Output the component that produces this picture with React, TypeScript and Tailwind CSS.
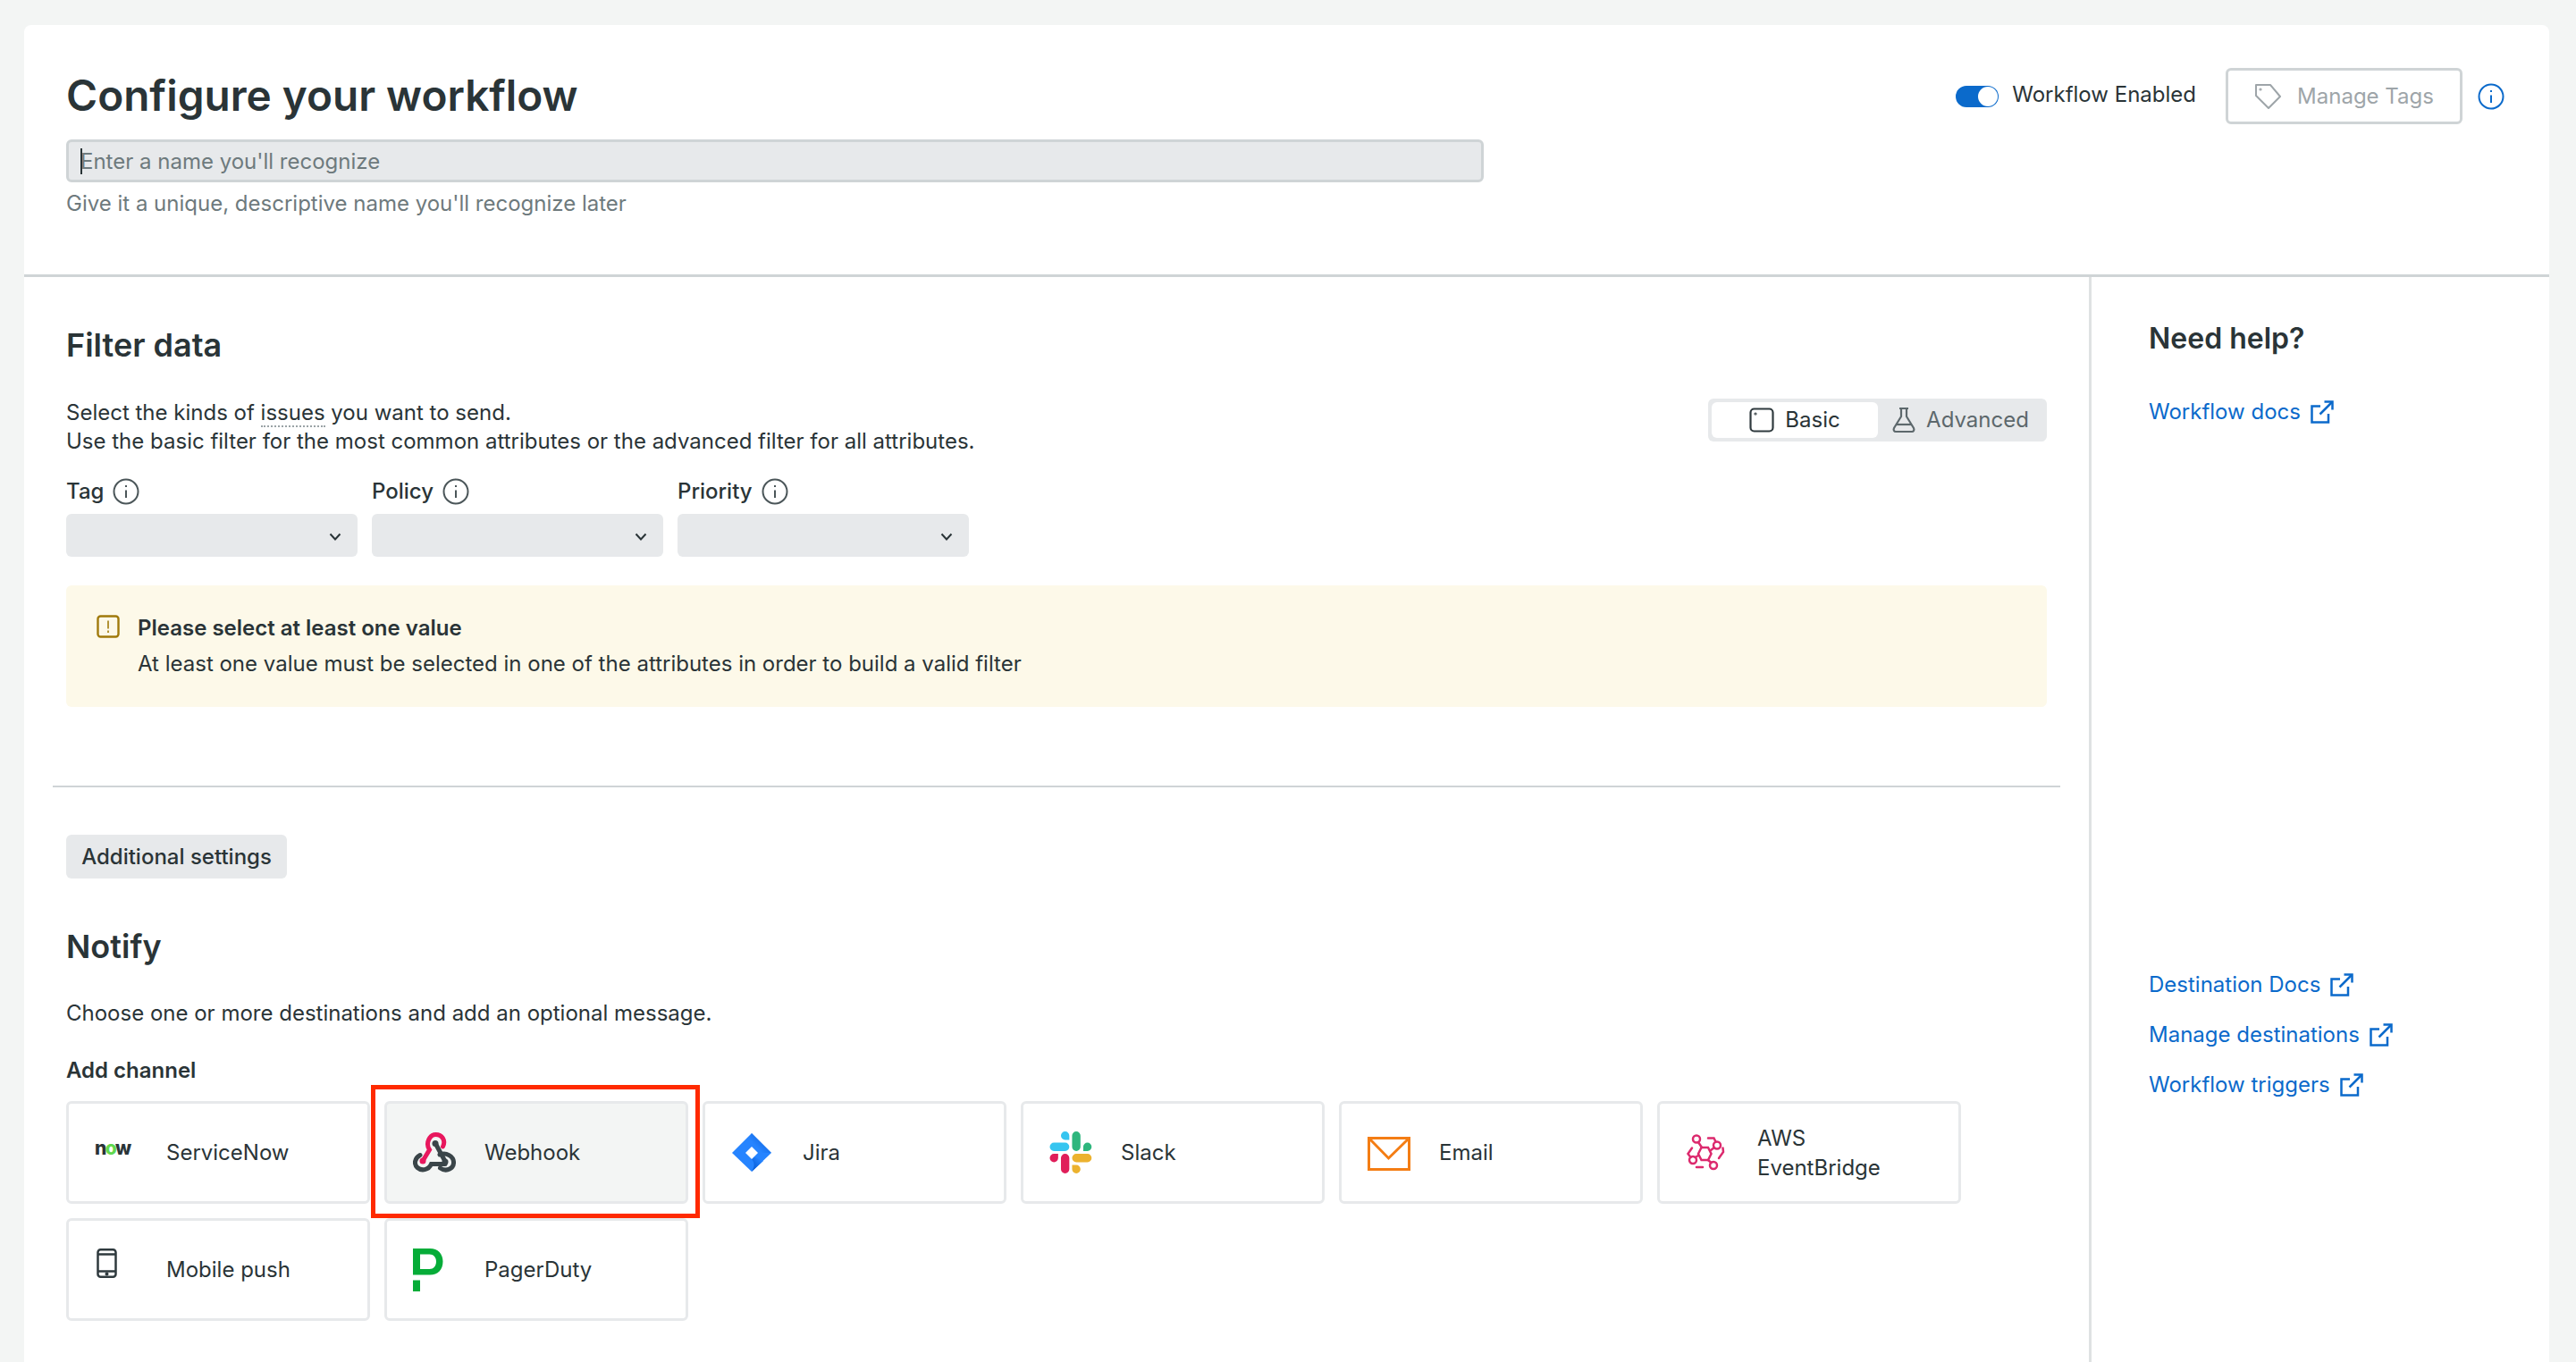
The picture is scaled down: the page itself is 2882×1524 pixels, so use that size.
import React from "react";

const channels = [
  { id: "servicenow", label: "ServiceNow" },
  { id: "webhook", label: "Webhook" },
  { id: "jira", label: "Jira" },
  { id: "slack", label: "Slack" },
  { id: "email", label: "Email" },
  { id: "eventbridge", label: "AWS EventBridge" },
  { id: "mobile", label: "Mobile push" },
  { id: "pagerduty", label: "PagerDuty" },
];

const InfoIcon = ({ color = "#4b5659" }: { color?: string }) => (
  <svg width="30" height="30" viewBox="0 0 30 30" fill="none" stroke={color} strokeWidth="2">
    <circle cx="15" cy="15" r="13.5" />
    <path d="M15 13.5V22" />
    <path d="M15 8v2" />
  </svg>
);

const ExternalIcon = () => (
  <svg width="26" height="26" viewBox="0 0 26 26" fill="none" stroke="#0b6acb" strokeWidth="2.5">
    <path d="M11 6.5H1.5V24.5H20V15" />
    <path d="M10.5 15.5L24 2" />
    <path d="M15.5 1.5H24.5V10.5" />
  </svg>
);

const Chevron = () => (
  <svg width="14" height="9" viewBox="0 0 14 9" fill="none" stroke="#2a3437" strokeWidth="2">
    <path d="M1.5 1.5L7 7.5L12.5 1.5" />
  </svg>
);

const HelpLink = ({ label }: { label: string }) => (
  <a className="flex items-center gap-[11px] text-[#0b6acb] h-[32px]">
    {label}
    <ExternalIcon />
  </a>
);

const FilterSelect = ({ label }: { label: string }) => (
  <div className="w-[326px]">
    <div className="flex items-center gap-[10px] h-[30px] font-medium">
      {label}
      <InfoIcon />
    </div>
    <div className="mt-[10px] h-[48px] rounded-[6px] bg-[#e7e9eb] flex items-center justify-end pr-[18px] pt-[3px]">
      <Chevron />
    </div>
  </div>
);

const ChannelIcon = ({ id }: { id: string }) => {
  if (id === "servicenow") {
    return (
      <div className="w-[48px] h-[48px] pt-[9px] text-[#2a3437] text-[21px] font-extrabold leading-[20px] tracking-[-1.5px]">
        n<span className="text-[#62d84e]">o</span>w
      </div>
    );
  }
  if (id === "webhook") {
    return (
      <svg width="48" height="48" viewBox="0 0 48 48" fill="none" strokeWidth="5">
        <path d="M8 26.5C1.5 30 1 37 5 40.5C9.5 44.5 17.5 43.5 20.5 36.5H36" stroke="#3a4549" strokeLinecap="round" />
        <path d="M30 26C37.5 23 45 28 45.5 34C46 41 38 46 30.5 41" stroke="#3a4549" strokeLinecap="round" />
        <path d="M25.5 14L36 33.5" stroke="#3a4549" strokeLinecap="round" />
        <circle cx="25" cy="13.5" r="3.5" fill="#3a4549" />
        <circle cx="36" cy="34" r="3.5" fill="#3a4549" />
        <path d="M11 33L18.5 20.5C13.5 13 19 3.5 25.5 3.5C32.5 3.5 37 10 33.5 17" stroke="#e8175d" strokeLinecap="round" />
        <circle cx="11" cy="33" r="3.5" fill="#e8175d" />
      </svg>
    );
  }
  if (id === "jira") {
    return (
      <svg width="48" height="48" viewBox="0 0 48 48">
        <defs>
          <linearGradient id="jiraTop" x1="0.9" y1="0.2" x2="0.3" y2="0.7">
            <stop offset="0" stopColor="#0052cc" />
            <stop offset="1" stopColor="#2684ff" />
          </linearGradient>
          <linearGradient id="jiraBottom" x1="0.2" y1="0.8" x2="0.8" y2="0.3">
            <stop offset="0" stopColor="#0052cc" />
            <stop offset="1" stopColor="#2684ff" />
          </linearGradient>
        </defs>
        <path d="M23 2L45 24L23 45L1 24Z" fill="#2684ff" />
        <path d="M23 2C19 8 20 12 23 17L30 24L45 24Z" fill="url(#jiraTop)" opacity="0.7" />
        <path d="M23 45C27 39 26 35 23 31L16 24L36 33Z" fill="url(#jiraBottom)" />
        <path d="M23 17L30 24L23 31L16 24Z" fill="#fff" />
      </svg>
    );
  }
  if (id === "slack") {
    return (
      <svg width="48" height="47" viewBox="0 0 54 54">
        <path d="M19.712.133a5.381 5.381 0 0 0-5.376 5.387 5.381 5.381 0 0 0 5.376 5.386h5.376V5.52A5.381 5.381 0 0 0 19.712.133m0 14.365H5.376A5.381 5.381 0 0 0 0 19.884a5.381 5.381 0 0 0 5.376 5.387h14.336a5.381 5.381 0 0 0 5.376-5.387 5.381 5.381 0 0 0-5.376-5.386" fill="#36C5F0" />
        <path d="M53.76 19.884a5.381 5.381 0 0 0-5.376-5.386 5.381 5.381 0 0 0-5.376 5.386v5.387h5.376a5.381 5.381 0 0 0 5.376-5.387m-14.336 0V5.52A5.381 5.381 0 0 0 34.048.133a5.381 5.381 0 0 0-5.376 5.387v14.364a5.381 5.381 0 0 0 5.376 5.387 5.381 5.381 0 0 0 5.376-5.387" fill="#2EB67D" />
        <path d="M34.048 54a5.381 5.381 0 0 0 5.376-5.387 5.381 5.381 0 0 0-5.376-5.386h-5.376v5.386A5.381 5.381 0 0 0 34.048 54m0-14.365h14.336a5.381 5.381 0 0 0 5.376-5.386 5.381 5.381 0 0 0-5.376-5.387H34.048a5.381 5.381 0 0 0-5.376 5.387 5.381 5.381 0 0 0 5.376 5.386" fill="#ECB22E" />
        <path d="M0 34.249a5.381 5.381 0 0 0 5.376 5.386 5.381 5.381 0 0 0 5.376-5.386v-5.387H5.376A5.381 5.381 0 0 0 0 34.25m14.336-.001v14.364A5.381 5.381 0 0 0 19.712 54a5.381 5.381 0 0 0 5.376-5.387V34.25a5.381 5.381 0 0 0-5.376-5.387 5.381 5.381 0 0 0-5.376 5.387" fill="#E01E5A" />
      </svg>
    );
  }
  if (id === "email") {
    return (
      <svg width="48" height="48" viewBox="0 0 48 48" fill="none" stroke="#f47d14" strokeWidth="3">
        <rect x="1.5" y="7.5" width="45" height="35" />
        <path d="M2 8L23.5 30L46 8" />
      </svg>
    );
  }
  if (id === "eventbridge") {
    return (
      <svg width="48" height="48" viewBox="0 0 48 48" fill="none" stroke="#dc2a6e" strokeWidth="2.5" strokeLinecap="round">
        <path d="M14 25L17.5 18H25L28.5 25L25 32H17.5Z" />
        <circle cx="12" cy="8.5" r="4" />
        <circle cx="35" cy="15.5" r="4" />
        <circle cx="31" cy="38" r="4" />
        <circle cx="8" cy="32" r="4" />
        <path d="M14 12L18 18M28 21L32 18M25 32L28.5 35M14 27L10.5 29" />
        <path d="M25 7.5H31.5L33.5 11.5" />
        <path d="M41.5 18.5L42 23L37 30" />
        <path d="M7 18.5L2.5 25L5.5 29" />
        <path d="M12 40H19" />
      </svg>
    );
  }
  if (id === "mobile") {
    return (
      <svg width="48" height="48" viewBox="0 0 48 48" fill="none" stroke="#2f3a3e" strokeWidth="2.5">
        <rect x="3.5" y="1.25" width="20" height="30.5" rx="3" />
        <path d="M3.5 6.5H23.5M3.5 25.5H23.5" />
        <circle cx="13.5" cy="28.5" r="0.8" fill="#2f3a3e" />
      </svg>
    );
  }
  return (
    <svg width="48" height="48" viewBox="0 0 48 48" fill="#06ac38">
      <path fillRule="evenodd" d="M0 0H19C28 0 33.5 6 33.5 14.5C33.5 23.5 28 29.5 19 29.5H0ZM8 6.5V23H18.5C23 23 26 19.5 26 14.5C26 10 23 6.5 18.5 6.5Z" />
      <rect x="0" y="35.5" width="8" height="12.5" />
    </svg>
  );
};

const ChannelCard = ({ id, label }: { id: string; label: string }) => {
  const selected = id === "webhook";
  return (
    <div
      className={`relative h-[115px] rounded-[6px] border-[3px] border-[#e7e9eb] flex items-center pl-[29px] gap-[32px] ${
        selected ? "bg-[#f3f5f4]" : "bg-white"
      }`}
    >
      <div className="w-[48px] h-[48px] shrink-0">
        <ChannelIcon id={id} />
      </div>
      <span className={id === "eventbridge" ? "w-[180px] leading-[33px]" : ""}>{label}</span>
      {selected && (
        <div className="absolute -left-[18px] -right-[16px] -top-[21px] -bottom-[19px] border-[5px] border-[#ff2a00]" />
      )}
    </div>
  );
};

export default function App() {
  return (
    <div className="h-[1524px] overflow-hidden bg-[#f3f5f4] pt-[28px] pl-[27px] pr-[30px] flex flex-col [font-family:Inter,sans-serif] text-[24px] leading-[32px] text-[#2a3437]">
      <div className="flex-1 min-h-0 flex flex-col bg-white rounded-t-[8px]">
        {/* Header */}
        <div className="h-[282px] shrink-0 border-b-[3px] border-[#cfd4d6] pl-[47px] pr-[50px] flex justify-between">
          <div className="w-[1586px] pt-[49px]">
            <h1 className="text-[47.7px] leading-[60px] font-semibold">Configure your workflow</h1>
            <div className="relative mt-[19px]">
              <input
                placeholder="Enter a name you'll recognize"
                className="w-full h-[48px] rounded-[6px] bg-[#e7e9eb] border-[3px] border-[#cfd4d6] px-[13px] text-[24px] outline-none placeholder:text-[#6e7a7d]"
              />
              <div className="absolute left-[16px] top-[10px] w-[2px] h-[29px] bg-[#2a3437]" />
            </div>
            <p className="mt-[8px] text-[#6e7a7d]">Give it a unique, descriptive name you'll recognize later</p>
          </div>
          <div className="flex items-center h-[63px] mt-[48px]">
            <div className="relative w-[48px] h-[24px] rounded-full bg-[#0b6acb]">
              <div className="absolute right-[1px] top-[1px] w-[22px] h-[22px] rounded-full bg-white" />
            </div>
            <span className="ml-[15px] -mt-[3px]">Workflow Enabled</span>
            <button className="ml-[33px] w-[265px] h-[63px] rounded-[6px] border-[3px] border-[#cfd4d6] flex items-center justify-center gap-[18px] text-[#9ea5a9]">
              <svg width="30" height="30" viewBox="0 0 30 30" fill="none" stroke="#9ea5a9" strokeWidth="2" strokeLinejoin="round">
                <path d="M2 2H18L29 15L16 28L2 14Z" />
                <circle cx="7" cy="7" r="0.6" />
              </svg>
              Manage Tags
            </button>
            <div className="ml-[17px]">
              <InfoIcon color="#0b6acb" />
            </div>
          </div>
        </div>

        <div className="flex-1 min-h-0 flex">
          {/* Main column */}
          <div className="w-[2313px] shrink-0 border-r-[3px] border-[#dfe2e3] pl-[47px] pr-[47px] pt-[54px]">
            <h2 className="text-[36px] leading-[44px] font-semibold">Filter data</h2>
            <div className="mt-[38px] flex justify-between items-start">
              <p className="leading-[31px]">
                Select the kinds of <span className="inline-block leading-[28px] border-b-2 border-dotted border-[#9aa3a6]">issues</span> you want to send.
                <br />
                Use the basic filter for the most common attributes or the advanced filter for all attributes.
              </p>
              <div className="w-[379px] h-[48px] rounded-[6px] bg-[#e7e9eb] p-[4px] flex">
                <div className="w-[186px] rounded-[6px] bg-white flex items-center justify-center gap-[12px]">
                  <svg width="28" height="28" viewBox="0 0 28 28" fill="none" stroke="#2f3a3e" strokeWidth="2.2">
                    <rect x="1.5" y="1.5" width="25" height="25" rx="4" />
                    <circle cx="7" cy="7" r="0.5" />
                  </svg>
                  Basic
                </div>
                <div className="flex-1 flex items-center justify-center gap-[12px] text-[#5d686c]">
                  <svg width="26" height="30" viewBox="0 0 26 30" fill="none" stroke="#5d686c" strokeWidth="2.2">
                    <path d="M8 2H18M10 2V11L2 24C1 26 2 28 4 28H22C24 28 25 26 24 24L16 11V2" />
                    <path d="M5 20H21" />
                  </svg>
                  Advanced
                </div>
              </div>
            </div>

            <div className="mt-[26px] flex gap-[16px]">
              <FilterSelect label="Tag" />
              <FilterSelect label="Policy" />
              <FilterSelect label="Priority" />
            </div>

            <div className="mt-[32px] h-[136px] rounded-[6px] bg-[#fdf9e9] pl-[34px] pt-[32px] flex gap-[20px]">
              <svg className="mt-[1px] shrink-0" width="26" height="26" viewBox="0 0 26 26" fill="none" stroke="#a07a0b" strokeWidth="2.4">
                <rect x="1.5" y="1.5" width="23" height="23" rx="3" />
                <path d="M13 6.5V15.5M13 17.5V20" strokeWidth="1.6" />
              </svg>
              <div>
                <div className="font-semibold">Please select at least one value</div>
                <div className="mt-[8px]">At least one value must be selected in one of the attributes in order to build a valid filter</div>
              </div>
            </div>

            <div className="mt-[88px] -mx-[15px] h-[2px] bg-[#cfd4d6]" />

            <button className="mt-[53px] block w-[247px] h-[49px] rounded-[6px] bg-[#e7e9eb] font-medium">Additional settings</button>

            <h2 className="mt-[54px] text-[36px] leading-[44px] font-semibold">Notify</h2>
            <p className="mt-[37px]">Choose one or more destinations and add an optional message.</p>
            <div className="mt-[32px] font-semibold">Add channel</div>

            <div className="mt-[18px] grid grid-cols-[repeat(6,340px)] gap-[16px]">
              {channels.map((c) => (
                <ChannelCard key={c.id} id={c.id} label={c.label} />
              ))}
            </div>
          </div>

          {/* Help column */}
          <div className="flex-1 pl-[64px] pt-[47px]">
            <h3 className="text-[32px] leading-[44px] font-semibold">Need help?</h3>
            <div className="mt-[44px]">
              <HelpLink label="Workflow docs" />
            </div>
            <div className="mt-[609px] flex flex-col gap-[24px]">
              <HelpLink label="Destination Docs" />
              <HelpLink label="Manage destinations" />
              <HelpLink label="Workflow triggers" />
            </div>
          </div>
        </div>
      </div>
    </div>
  );
}
